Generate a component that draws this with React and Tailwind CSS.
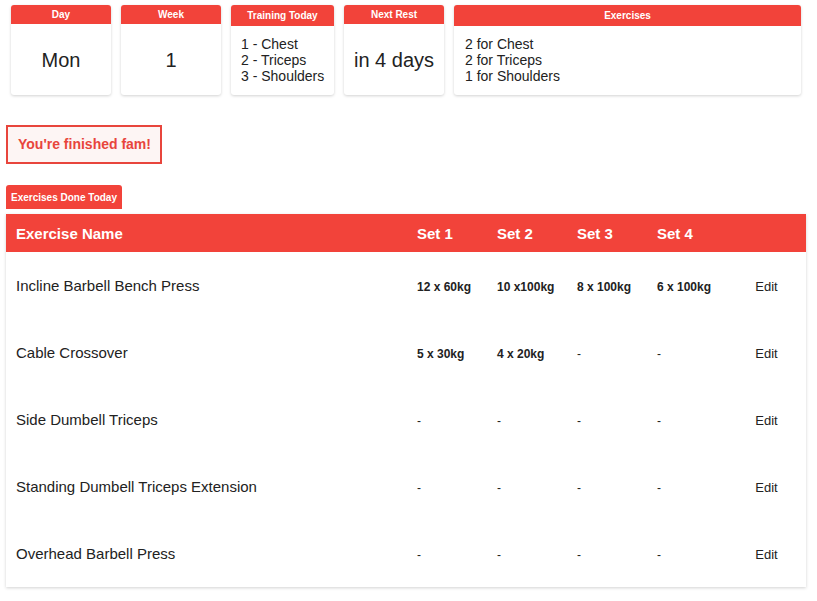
import React from "react";

const RED = "bg-[#f2433a]";

function Card({ title, width, headH, children, align = "center", pad = "pl-[10px]" }) {
  return (
    <div className={`${width} h-[90px] bg-white rounded-[3px] shadow-[0_1px_3px_rgba(0,0,0,0.18)] flex flex-col overflow-hidden`}>
      <div className={`${RED} ${headH} flex items-center justify-center text-white text-[10px] font-bold`}>{title}</div>
      <div className={`flex-1 flex items-center ${align === "center" ? "justify-center" : pad} text-[#222]`}>{children}</div>
    </div>
  );
}

const rows = [
  ["Incline Barbell Bench Press", "12 x 60kg", "10 x100kg", "8 x 100kg", "6 x 100kg"],
  ["Cable Crossover", "5 x 30kg", "4 x 20kg", "-", "-"],
  ["Side Dumbell Triceps", "-", "-", "-", "-"],
  ["Standing Dumbell Triceps Extension", "-", "-", "-", "-"],
  ["Overhead Barbell Press", "-", "-", "-", "-"],
];

export default function App() {
  return (
    <div className="w-[817px] h-[601px] bg-white font-['Liberation_Sans',Arial,sans-serif] overflow-hidden">
      <div className="flex gap-[10px] pl-[11px] pt-[5px]">
        <Card title="Day" width="w-[100px]" headH="h-[19px]">
          <span className="text-[20px]">Mon</span>
        </Card>
        <Card title="Week" width="w-[100px]" headH="h-[19px]">
          <span className="text-[20px]">1</span>
        </Card>
        <Card title="Training Today" width="w-[103px]" headH="h-[21px]" align="left">
          <div className="text-[14px] leading-[16px] pb-[2px]">
            <div>1 - Chest</div>
            <div>2 - Triceps</div>
            <div>3 - Shoulders</div>
          </div>
        </Card>
        <Card title="Next Rest" width="w-[100px]" headH="h-[19px]">
          <span className="text-[20px]">in 4 days</span>
        </Card>
        <Card title="Exercises" width="w-[347px]" headH="h-[21px]" align="left" pad="pl-[11px]">
          <div className="text-[14px] leading-[16px] pb-[2px]">
            <div>2 for Chest</div>
            <div>2 for Triceps</div>
            <div>1 for Shoulders</div>
          </div>
        </Card>
      </div>

      <div className="ml-[6px] mt-[30px] w-[156px] h-[39px] border-2 border-[#e8453c] bg-[#fdf5f4] flex items-center pl-[10px] text-[14px] font-bold text-[#e8453c]">
        You're finished fam!
      </div>

      <div className={`ml-[6px] mt-[21px] w-[116px] h-[24px] ${RED} rounded-t-[3px] flex items-center pl-[5px] text-white text-[10px] font-bold`}>
        Exercises Done Today
      </div>

      <div className="ml-[6px] mt-[5px] w-[800px] bg-white shadow-[0_1px_3px_rgba(0,0,0,0.18)]">
        <div className={`${RED} h-[38px] pt-[2px] grid grid-cols-[401px_80px_80px_80px_80px_1fr] items-center text-white text-[15px] font-bold`}>
          <div className="pl-[10px]">Exercise Name</div>
          <div className="pl-[10px]">Set 1</div>
          <div className="pl-[10px]">Set 2</div>
          <div className="pl-[10px]">Set 3</div>
          <div className="pl-[10px]">Set 4</div>
          <div></div>
        </div>
        {rows.map((r, i) => (
          <div key={i} className="h-[67px] pt-[2px] grid grid-cols-[401px_80px_80px_80px_80px_1fr] items-center text-[#222]">
            <div className="pl-[10px] text-[15px]">{r[0]}</div>
            {r.slice(1).map((s, j) => (
              <div key={j} className={`pl-[10px] text-[12px] ${s === "-" ? "" : "font-bold"}`}>{s}</div>
            ))}
            <div className="text-center text-[13px]">Edit</div>
          </div>
        ))}
      </div>
    </div>
  );
}
